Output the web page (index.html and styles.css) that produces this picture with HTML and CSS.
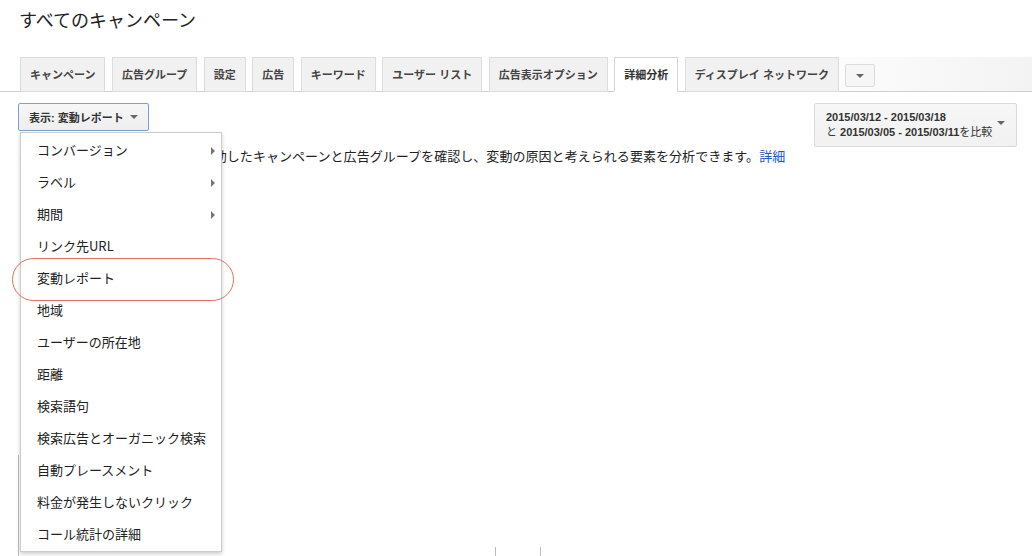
FILE: index.html
```html
<!DOCTYPE html>
<html lang="ja">
<head>
    <meta charset="UTF-8">
    <title>すべてのキャンペーン</title>
    <link rel="stylesheet" href="styles.css">
</head>
<body>
    <h1 class="page-title">すべてのキャンペーン</h1>

    <div class="tab-bar">
        <div class="tab">キャンペーン</div>
        <div class="tab">広告グループ</div>
        <div class="tab">設定</div>
        <div class="tab">広告</div>
        <div class="tab">キーワード</div>
        <div class="tab">ユーザー リスト</div>
        <div class="tab">広告表示オプション</div>
        <div class="tab active">詳細分析</div>
        <div class="tab">ディスプレイ ネットワーク</div>
        <div class="tab-more"><span class="caret"></span></div>
    </div>

    <div class="content">
        <div class="toolbar">
            <button class="view-btn">表示: 変動レポート <span class="caret"></span></button>
            <button class="date-btn">
                <span class="date-lines">
                    <b>2015/03/12 - 2015/03/18</b><br>
                    と <b>2015/03/05 - 2015/03/11</b>を比較
                </span>
                <span class="caret"></span>
            </button>
        </div>

        <p class="description">この期間中に掲載結果が大きく変動したキャンペーンと広告グループを確認し、変動の原因と考えられる要素を分析できます。<a href="#">詳細</a></p>

        <div class="report">
            <div class="report-head"></div>
            <div class="report-row">
                <div class="cell wide"></div>
                <div class="cell narrow"></div>
            </div>
        </div>

        <ul class="view-menu">
            <li class="has-sub">コンバージョン</li>
            <li class="has-sub">ラベル</li>
            <li class="has-sub">期間</li>
            <li>リンク先URL</li>
            <li>変動レポート</li>
            <li>地域</li>
            <li>ユーザーの所在地</li>
            <li>距離</li>
            <li>検索語句</li>
            <li>検索広告とオーガニック検索</li>
            <li>自動プレースメント</li>
            <li>料金が発生しないクリック</li>
            <li>コール統計の詳細</li>
        </ul>
        <div class="highlight"></div>
    </div>
</body>
</html>
```

FILE: styles.css
```css
* {
    margin: 0;
    padding: 0;
    box-sizing: border-box;
}

body {
    font-family: 'Liberation Sans', Arial, 'Noto Sans CJK JP', sans-serif;
    background-color: #ffffff;
    color: #222;
    width: 1032px;
    height: 556px;
    overflow: hidden;
}

.page-title {
    font-family: 'Noto Sans CJK JP', sans-serif;
    font-size: 18px;
    font-weight: normal;
    color: #222;
    line-height: 22px;
    padding: 8px 0 0 19px;
    height: 57px;
}

.tab-bar {
    display: flex;
    align-items: flex-end;
    gap: 6.5px;
    padding-left: 20px;
    height: 35px;
    border-bottom: 1px solid #cfcfcf;
    background: linear-gradient(to right, #ffffff 75%, #f3f3f3);
}

.tab {
    height: 35px;
    margin-bottom: -1px;
    padding: 0 9px;
    line-height: 34px;
    font-size: 11px;
    font-weight: bold;
    color: #444;
    background-color: #f1f1f1;
    border: 1px solid #dcdcdc;
    white-space: nowrap;
}

.tab.active {
    background-color: #ffffff;
    border-color: #d6d6d6;
    border-bottom-color: #ffffff;
    color: #333;
}

.tab-more {
    width: 30px;
    height: 23px;
    margin-bottom: 4px;
    border: 1px solid #dcdcdc;
    border-radius: 2px;
    background-color: #f6f6f6;
    display: flex;
    align-items: center;
    justify-content: center;
}

.caret {
    display: inline-block;
    width: 0;
    height: 0;
    border-left: 4px solid transparent;
    border-right: 4px solid transparent;
    border-top: 4px solid #666;
}

.content {
    position: relative;
    padding: 11px 15px 0 18px;
}

.toolbar {
    display: flex;
    justify-content: space-between;
    align-items: flex-start;
}

.view-btn {
    height: 28px;
    padding: 0 10px;
    font-family: inherit;
    font-size: 11px;
    font-weight: bold;
    color: #333;
    background: linear-gradient(#f7f7f7, #eeeeee);
    border: 1px solid #7c9fd6;
    border-radius: 2px;
    display: flex;
    align-items: center;
    gap: 6px;
}

.date-btn {
    height: 44px;
    width: 203px;
    padding: 0 11px;
    font-family: inherit;
    font-size: 11px;
    color: #333;
    text-align: left;
    line-height: 15px;
    background: linear-gradient(#f7f7f7, #f1f1f1);
    border: 1px solid #dadada;
    border-radius: 2px;
    display: flex;
    align-items: center;
    justify-content: space-between;
}

.date-btn .caret {
    margin-top: -4px;
}

.description {
    font-family: 'Noto Sans CJK JP', sans-serif;
    font-size: 13px;
    line-height: 18px;
    margin-top: 0;
    white-space: nowrap;
    letter-spacing: 0.05px;
    color: #222;
}

.description a {
    color: #1a56c9;
    text-decoration: none;
}

.report {
    margin-top: 290px;
    border-left: 1px solid #bdbdbd;
}

.report-head {
    height: 92px;
}

.report-row {
    display: flex;
    height: 20px;
}

.cell {
    border-right: 1px solid #bdbdbd;
}

.cell.wide {
    width: 477px;
}

.cell.narrow {
    width: 45px;
}

.view-menu {
    position: absolute;
    left: 20px;
    top: 40px;
    width: 202px;
    list-style: none;
    background-color: #ffffff;
    border: 1px solid #cccccc;
    box-shadow: 0px 2px 4px rgba(0, 0, 0, 0.2);
    padding: 1px 0 1px;
}

.view-menu li {
    position: relative;
    height: 32px;
    line-height: 32px;
    padding-left: 16px;
    font-family: 'Noto Sans CJK JP', sans-serif;
    font-size: 13px;
    color: #222;
    white-space: nowrap;
}

.view-menu li.has-sub::after {
    content: "";
    position: absolute;
    right: 6px;
    top: 13px;
    border-top: 4px solid transparent;
    border-bottom: 4px solid transparent;
    border-left: 4px solid #777;
}

.highlight {
    position: absolute;
    left: 12px;
    top: 166px;
    width: 222px;
    height: 43px;
    border: 1px solid #df6f5e;
    border-radius: 22px;
}
```
